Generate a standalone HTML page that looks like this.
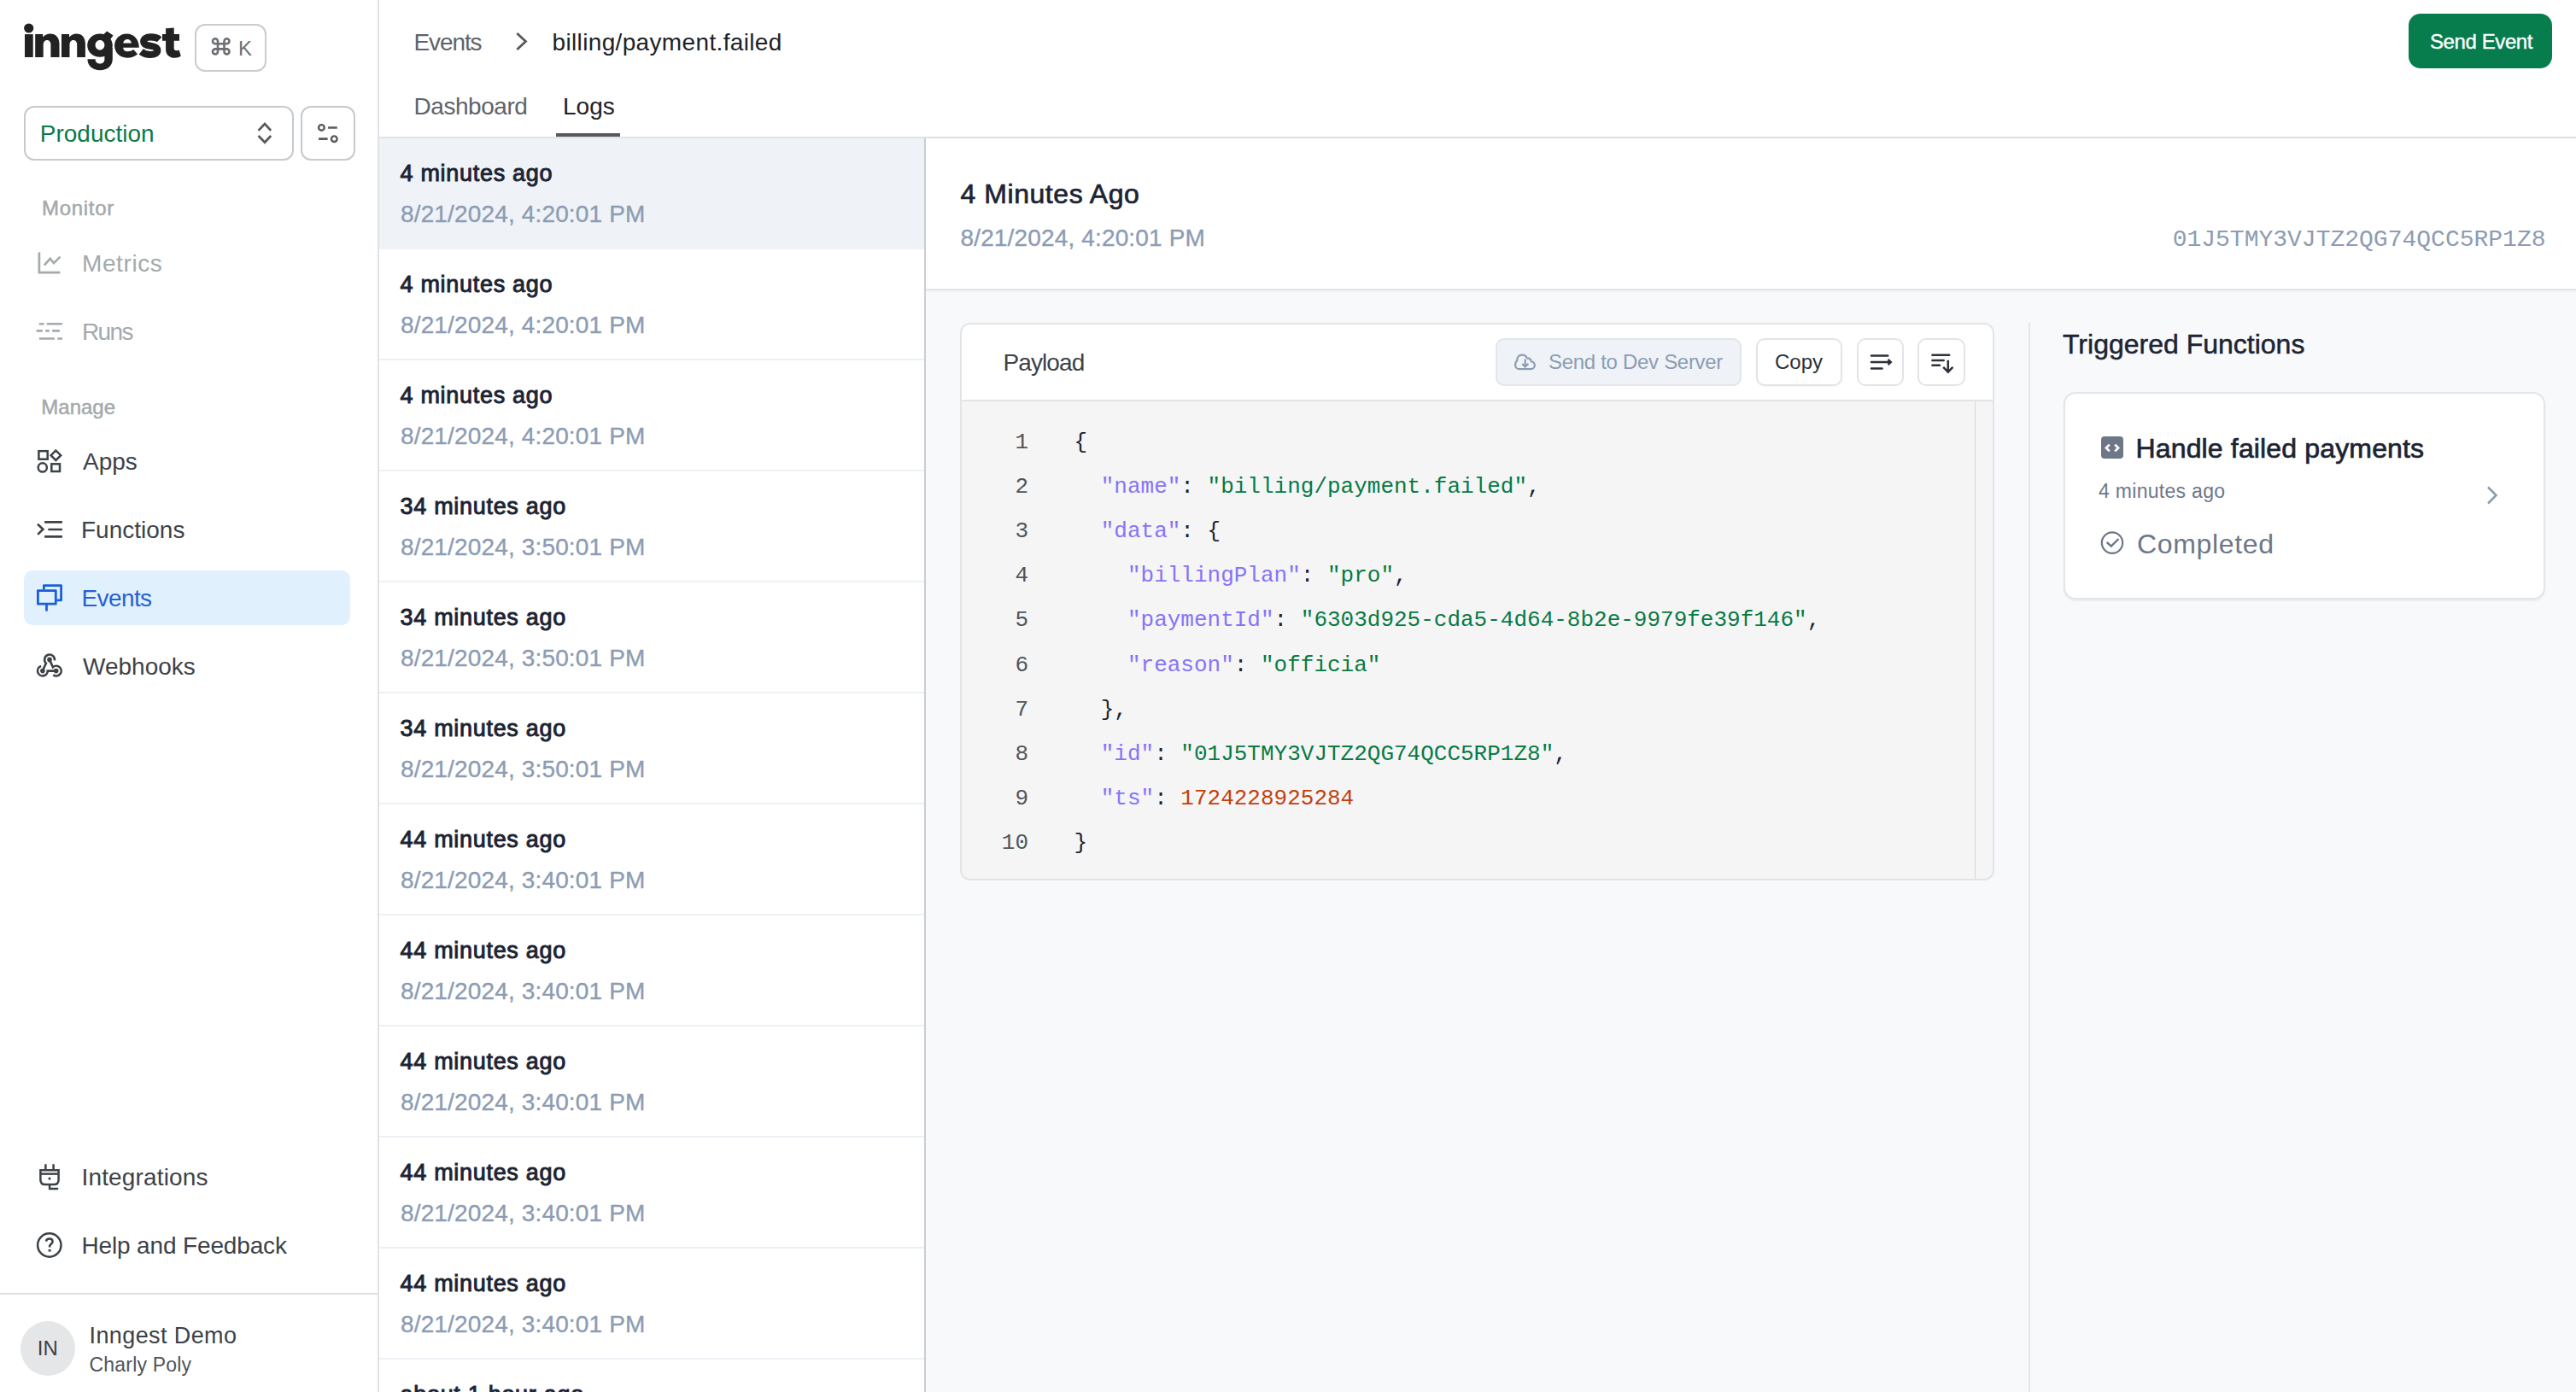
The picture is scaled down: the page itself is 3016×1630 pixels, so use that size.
<!DOCTYPE html>
<html><head><meta charset="utf-8"><title>Inngest Events</title>
<style>
html,body{margin:0;padding:0;width:3016px;height:1630px;overflow:hidden;background:#ffffff;}
body{position:relative;font-family:'Liberation Sans', sans-serif;}
.t{position:absolute;white-space:nowrap;line-height:1;}
.s{font-family:'Liberation Sans', sans-serif;}
.m{font-family:'Liberation Mono', monospace;}
.b{position:absolute;box-sizing:border-box;}
</style></head><body>

<div class="b" style="left:1084px;top:340px;width:1932px;height:1290px;background:#f8f9fb;"></div>
<div class="b" style="left:1084px;top:162px;width:1932px;height:176px;background:#ffffff;"></div>
<div class="b" style="left:1084px;top:338px;width:1932px;height:2px;background:#e3e5e8;"></div>
<div class="b" style="left:1084px;top:340px;width:1932px;height:3px;background:linear-gradient(#eceef1,#f8f9fb);"></div>
<div class="b" style="left:444px;top:160px;width:2572px;height:2px;background:#dfe1e4;"></div>
<div class="b" style="left:442px;top:0px;width:2px;height:1630px;background:#e0e2e5;"></div>
<div class="b" style="left:1082px;top:162px;width:2px;height:1468px;background:#c9cdd2;"></div>
<svg class="b" style="left:0;top:0" width="230" height="100" viewBox="0 0 230 100"><g fill="#222222"><circle cx="33.7" cy="33" r="5.6"/><rect x="29" y="40.1" width="9.7" height="26.9"/><path d="M41.2 67 V40.1 H50.2 V43.6 C52 41 55 39.4 58.8 39.4 C65.4 39.4 69.5 44 69.5 51.2 V67 H59.4 V52.8 C59.4 49.2 57.8 47.1 55 47.1 C52.3 47.1 50.7 49.3 50.7 52.9 V67 Z"/><path d="M72 67 V40.1 H81 V43.6 C82.8 41 85.8 39.4 89.6 39.4 C96.2 39.4 99.9 44 99.9 51.2 V67 H90.2 V52.8 C90.2 49.2 88.6 47.1 85.8 47.1 C83.1 47.1 81.5 49.3 81.5 52.9 V67 Z"/><path fill-rule="evenodd" d="M117 39.4 C125.3 39.4 131.8 45.4 131.8 53.1 C131.8 60.8 125.3 66.8 117 66.8 C108.7 66.8 102.2 60.8 102.2 53.1 C102.2 45.4 108.7 39.4 117 39.4 Z M117 47 C113.9 47 111.6 49.6 111.6 52.75 C111.6 55.9 113.9 58.5 117 58.5 C120.1 58.5 122.4 55.9 122.4 52.75 C122.4 49.6 120.1 47 117 47 Z"/><path d="M120.5 41 L125.2 36.6 L132.6 41.4 L128.8 46.5 Z"/><path d="M122.4 56 V69.6 C122.4 72.8 120.2 74.6 117 74.6 C113.8 74.6 111.6 72.6 111.6 69.3 H102.4 C102.6 77.4 109 82.2 117 82.2 C125.6 82.2 131.8 77 131.8 69.2 V56 Z"/><path fill-rule="evenodd" d="M162.8 55.7 C162.8 45.8 156.6 39.4 148.4 39.4 C140.1 39.4 134.1 45.6 134.1 53.6 C134.1 61.7 140.3 67.7 148.7 67.7 C154.3 67.7 158.5 65.6 161.1 63.2 L156.2 58 C154.4 59.3 151.9 60.3 149.1 60.3 C146.3 60.3 144.5 58.6 144.1 55.7 Z M144.2 50.4 C144.7 47.8 146.5 46.1 149.1 46.1 C151.6 46.1 153.5 47.8 154 50.4 Z"/><path d="M194.1 33.2 L203.7 32.4 V40.1 H210 V47.7 H203.7 V56.3 C203.7 58.4 204.8 59.3 206.5 59.3 C207.7 59.3 208.7 59.1 209.7 58.8 L211.8 65.5 C209.8 67 207.6 67.7 204.8 67.7 C198.4 67.7 194.1 64.2 194.1 57.4 V47.7 H190 V40.1 H194.1 Z"/></g><path d="M186.6 46.4 C184.4 44.3 180.8 43.4 176.3 43.4 C171.2 43.4 168.2 45.5 168.2 48.7 C168.2 52.5 172.2 53.2 176.3 53.7 C181.2 54.3 184.3 55.8 184.3 59.1 C184.3 62.3 181 64 176 64 C171.5 64 167.8 62.6 165.2 60.6" stroke="#222222" stroke-width="8.2" fill="none"/></svg>
<div class="b" style="left:228px;top:28px;width:84px;height:56px;border:2px solid #c8ccd0;border-radius:12px;"></div>
<svg class="b" style="left:245px;top:42px;" width="27" height="25" viewBox="0 0 27 25" fill="none"><path d="M7 9.3 A3 3 0 1 1 10 6.3 V18.4 A3 3 0 1 1 7 15.4 H20.5 A3 3 0 1 1 17.5 18.4 V6.3 A3 3 0 1 1 20.5 9.3 Z" stroke="#6b6f73" stroke-width="2.6" fill="none"/></svg>
<div class="t s" style="top:44.8px;font-size:24px;color:#6b6f73;left:279.0px;">K</div>
<div class="b" style="left:28px;top:124px;width:316px;height:64px;border:2px solid #c6cacd;border-radius:12px;"></div>
<div class="t s" style="top:143.0px;font-size:28px;color:#0a7a48;left:46.8px;">Production</div>
<svg class="b" style="left:298px;top:140px;" width="24" height="32" viewBox="0 0 24 32" fill="none"><path d="M4.6 12.9 L12 5 L19.2 12.9 M4.6 19 L12 26.7 L19.2 19" stroke="#58595b" stroke-width="2.7"/></svg>
<div class="b" style="left:352px;top:124px;width:64px;height:64px;border:2px solid #c6cacd;border-radius:12px;"></div>
<svg class="b" style="left:368px;top:140px;" width="32" height="32" viewBox="0 0 32 32" fill="none"><circle cx="8.4" cy="9.4" r="3.3" stroke="#58595b" stroke-width="2.4"/><circle cx="23.3" cy="22.7" r="3.3" stroke="#58595b" stroke-width="2.4"/><path d="M16.1 9.5 H26.8 M5.1 22.6 H15.6" stroke="#58595b" stroke-width="2.6"/></svg>
<div class="t s" style="top:232.3px;font-size:24px;color:#a3a9ac;left:49.0px;letter-spacing:0.7px;-webkit-text-stroke:0.5px #a3a9ac;">Monitor</div>
<div class="t s" style="top:464.8px;font-size:24px;color:#a3a9ac;left:48.3px;-webkit-text-stroke:0.5px #a3a9ac;">Manage</div>
<svg class="b" style="left:38px;top:290px;" width="40" height="40" viewBox="0 0 40 40" fill="none"><path d="M7.9 5.5 V29.2 H32.5 M13.8 20.7 L20.7 12.9 L25 18.1 L32.5 10.6" stroke="#a4aaad" stroke-width="2.7"/></svg>
<div class="t s" style="top:295.0px;font-size:28px;color:#a3a9ac;left:96.0px;letter-spacing:0.6px;">Metrics</div>
<svg class="b" style="left:38px;top:368px;" width="40" height="40" viewBox="0 0 40 40" fill="none"><path d="M7.8 11.3 H13.6 M16.8 11.3 H35 M4.6 19.4 H11.9 M15.2 19.4 H19.8 M23.1 19.4 H31.9 M7.9 28.5 H25.9 M29.2 28.5 H35" stroke="#a4aaad" stroke-width="2.6"/></svg>
<div class="t s" style="top:375.0px;font-size:28px;color:#a3a9ac;left:96.0px;letter-spacing:-1.6px;">Runs</div>
<svg class="b" style="left:38px;top:520px;" width="40" height="40" viewBox="0 0 40 40" fill="none"><rect x="7.4" y="8.2" width="10.3" height="9.5" stroke="#3d4248" stroke-width="2.5"/><path d="M27.4 7.6 L33.2 13.2 L27.4 18.9 L21.6 13.2 Z" stroke="#3d4248" stroke-width="2.5"/><circle cx="11.8" cy="27.4" r="5.1" stroke="#3d4248" stroke-width="2.5"/><rect x="22.3" y="23.3" width="9.7" height="8.7" stroke="#3d4248" stroke-width="2.5"/></svg>
<div class="t s" style="top:527.0px;font-size:28px;color:#3d4247;left:97.0px;">Apps</div>
<svg class="b" style="left:38px;top:600px;" width="40" height="40" viewBox="0 0 40 40" fill="none"><path d="M6 13.8 L12.4 19.8 L6.2 25.9" stroke="#3d4248" stroke-width="2.6"/><path d="M14.1 11.4 H34.9 M18.4 20 H34.9 M14.1 28.4 H34.9" stroke="#3d4248" stroke-width="2.7"/></svg>
<div class="t s" style="top:607.0px;font-size:28px;color:#3d4247;left:95.0px;">Functions</div>
<div class="b" style="left:28px;top:668px;width:382px;height:64px;background:#e1f0fd;border-radius:10px;"></div>
<svg class="b" style="left:38px;top:680px;" width="40" height="40" viewBox="0 0 40 40" fill="none"><path d="M13.4 10.3 V5.6 H33.6 V22.8 H28.3" stroke="#1a5fd8" stroke-width="2.8" stroke-linejoin="round"/><rect x="6.4" y="11.6" width="20.9" height="15.6" stroke="#1a5fd8" stroke-width="2.8" stroke-linejoin="round"/><path d="M16.5 27.2 V35.6" stroke="#1a5fd8" stroke-width="2.8"/></svg>
<div class="t s" style="top:687.0px;font-size:28px;color:#2660d5;left:95.5px;letter-spacing:-0.6px;">Events</div>
<svg class="b" style="left:38px;top:758px;" width="40" height="40" viewBox="0 0 40 40" fill="none"><g stroke="#3d4248" stroke-width="2.6" fill="none"><path d="M11.9 27.6 L15.9 18.6 A5.9 5.9 0 1 1 25.9 15.4"/><path d="M10.1 21.9 A5.9 5.9 0 1 0 17.8 27.6 H27.7"/><path d="M20 14.4 L23.9 23.2 A5.9 5.9 0 1 1 24.3 32.4"/></g><circle cx="20" cy="14.4" r="2.8" fill="#3d4248"/><circle cx="11.9" cy="27.6" r="2.8" fill="#3d4248"/><circle cx="27.7" cy="27.6" r="2.8" fill="#3d4248"/></svg>
<div class="t s" style="top:767.0px;font-size:28px;color:#3d4247;left:97.0px;">Webhooks</div>
<svg class="b" style="left:38px;top:1358px;" width="40" height="40" viewBox="0 0 40 40" fill="none"><g stroke="#3d4248" stroke-width="2.5" fill="none"><path d="M15.4 5.2 V12 M24.6 5.2 V12"/><path d="M9.4 12.2 H30.6 V23.5 Q30.6 29.1 25 29.1 H15 Q9.4 29.1 9.4 23.5 Z"/><path d="M9.4 16.6 H30.6"/><path d="M20.1 29.1 V34 H30.2"/></g><circle cx="20" cy="22.1" r="1.6" fill="#3d4248"/></svg>
<div class="t s" style="top:1365.0px;font-size:28px;color:#3d4247;left:95.5px;letter-spacing:0.15px;">Integrations</div>
<svg class="b" style="left:38px;top:1438px;" width="40" height="40" viewBox="0 0 40 40" fill="none"><circle cx="19.8" cy="20" r="13.7" stroke="#3d4248" stroke-width="2.5"/><path d="M16 15.6 C16.3 13.5 17.9 12.6 19.9 12.6 C22.2 12.6 23.6 14 23.6 15.9 C23.6 18.4 20.1 18.8 20.1 21.8 V22.5" stroke="#3d4248" stroke-width="2.5" fill="none"/><rect x="18.6" y="25" width="3" height="2.6" fill="#3d4248"/></svg>
<div class="t s" style="top:1445.0px;font-size:28px;color:#3d4247;left:95.5px;letter-spacing:-0.15px;">Help and Feedback</div>
<div class="b" style="left:0px;top:1514px;width:442px;height:2px;background:#dfe1e4;"></div>
<div class="b" style="left:24px;top:1547px;width:64px;height:64px;background:#e5e6e8;border-radius:50%;"></div>
<div class="t s" style="top:1567.3px;font-size:24px;color:#3d4247;left:43.8px;">IN</div>
<div class="t s" style="top:1550.5px;font-size:27px;color:#3d4247;left:104.5px;letter-spacing:0.4px;">Inngest Demo</div>
<div class="t s" style="top:1587.1px;font-size:23px;color:#4f555b;left:104.5px;letter-spacing:0.2px;">Charly Poly</div>
<div class="t s" style="top:36.4px;font-size:28px;color:#5f6368;left:484.5px;letter-spacing:-1.1px;">Events</div>
<svg class="b" style="left:598px;top:32px;" width="24" height="32" viewBox="0 0 24 32" fill="none"><path d="M7.3 7 L17.5 16.5 L7.3 26" stroke="#58595b" stroke-width="2.8"/></svg>
<div class="t s" style="top:36.4px;font-size:28px;color:#1e2226;left:646.5px;letter-spacing:0.35px;">billing/payment.failed</div>
<div class="t s" style="top:111.0px;font-size:28px;color:#5f6368;left:484.5px;letter-spacing:-0.45px;">Dashboard</div>
<div class="t s" style="top:111.0px;font-size:28px;color:#1e2226;left:659.0px;">Logs</div>
<div class="b" style="left:651px;top:156px;width:75px;height:4px;background:#57595c;"></div>
<div class="b" style="left:2820px;top:16px;width:168px;height:64px;background:#077c4d;border-radius:14px;"></div>
<div class="t s" style="top:36.8px;font-size:24px;color:#ffffff;left:2845.0px;letter-spacing:-0.4px;-webkit-text-stroke:0.4px #ffffff;">Send Event</div>
<div class="b" style="left:444px;top:162px;width:638px;height:130px;background:#eff3f8;"></div>
<div class="t s" style="top:189.5px;font-size:27px;color:#1c2434;left:468.5px;letter-spacing:0.7px;-webkit-text-stroke:0.95px #1c2434;">4 minutes ago</div>
<div class="t s" style="top:237.0px;font-size:28px;color:#8c9cb3;left:469.0px;letter-spacing:0.15px;-webkit-text-stroke:0.35px #8c9cb3;">8/21/2024, 4:20:01 PM</div>
<div class="b" style="left:444px;top:420px;width:638px;height:2px;background:#edf1f6;"></div>
<div class="t s" style="top:319.5px;font-size:27px;color:#1c2434;left:468.5px;letter-spacing:0.7px;-webkit-text-stroke:0.95px #1c2434;">4 minutes ago</div>
<div class="t s" style="top:367.0px;font-size:28px;color:#8c9cb3;left:469.0px;letter-spacing:0.15px;-webkit-text-stroke:0.35px #8c9cb3;">8/21/2024, 4:20:01 PM</div>
<div class="b" style="left:444px;top:550px;width:638px;height:2px;background:#edf1f6;"></div>
<div class="t s" style="top:449.5px;font-size:27px;color:#1c2434;left:468.5px;letter-spacing:0.7px;-webkit-text-stroke:0.95px #1c2434;">4 minutes ago</div>
<div class="t s" style="top:497.0px;font-size:28px;color:#8c9cb3;left:469.0px;letter-spacing:0.15px;-webkit-text-stroke:0.35px #8c9cb3;">8/21/2024, 4:20:01 PM</div>
<div class="b" style="left:444px;top:680px;width:638px;height:2px;background:#edf1f6;"></div>
<div class="t s" style="top:579.5px;font-size:27px;color:#1c2434;left:468.5px;letter-spacing:0.7px;-webkit-text-stroke:0.95px #1c2434;">34 minutes ago</div>
<div class="t s" style="top:627.0px;font-size:28px;color:#8c9cb3;left:469.0px;letter-spacing:0.15px;-webkit-text-stroke:0.35px #8c9cb3;">8/21/2024, 3:50:01 PM</div>
<div class="b" style="left:444px;top:810px;width:638px;height:2px;background:#edf1f6;"></div>
<div class="t s" style="top:709.5px;font-size:27px;color:#1c2434;left:468.5px;letter-spacing:0.7px;-webkit-text-stroke:0.95px #1c2434;">34 minutes ago</div>
<div class="t s" style="top:757.0px;font-size:28px;color:#8c9cb3;left:469.0px;letter-spacing:0.15px;-webkit-text-stroke:0.35px #8c9cb3;">8/21/2024, 3:50:01 PM</div>
<div class="b" style="left:444px;top:940px;width:638px;height:2px;background:#edf1f6;"></div>
<div class="t s" style="top:839.5px;font-size:27px;color:#1c2434;left:468.5px;letter-spacing:0.7px;-webkit-text-stroke:0.95px #1c2434;">34 minutes ago</div>
<div class="t s" style="top:887.0px;font-size:28px;color:#8c9cb3;left:469.0px;letter-spacing:0.15px;-webkit-text-stroke:0.35px #8c9cb3;">8/21/2024, 3:50:01 PM</div>
<div class="b" style="left:444px;top:1070px;width:638px;height:2px;background:#edf1f6;"></div>
<div class="t s" style="top:969.5px;font-size:27px;color:#1c2434;left:468.5px;letter-spacing:0.7px;-webkit-text-stroke:0.95px #1c2434;">44 minutes ago</div>
<div class="t s" style="top:1017.0px;font-size:28px;color:#8c9cb3;left:469.0px;letter-spacing:0.15px;-webkit-text-stroke:0.35px #8c9cb3;">8/21/2024, 3:40:01 PM</div>
<div class="b" style="left:444px;top:1200px;width:638px;height:2px;background:#edf1f6;"></div>
<div class="t s" style="top:1099.5px;font-size:27px;color:#1c2434;left:468.5px;letter-spacing:0.7px;-webkit-text-stroke:0.95px #1c2434;">44 minutes ago</div>
<div class="t s" style="top:1147.0px;font-size:28px;color:#8c9cb3;left:469.0px;letter-spacing:0.15px;-webkit-text-stroke:0.35px #8c9cb3;">8/21/2024, 3:40:01 PM</div>
<div class="b" style="left:444px;top:1330px;width:638px;height:2px;background:#edf1f6;"></div>
<div class="t s" style="top:1229.5px;font-size:27px;color:#1c2434;left:468.5px;letter-spacing:0.7px;-webkit-text-stroke:0.95px #1c2434;">44 minutes ago</div>
<div class="t s" style="top:1277.0px;font-size:28px;color:#8c9cb3;left:469.0px;letter-spacing:0.15px;-webkit-text-stroke:0.35px #8c9cb3;">8/21/2024, 3:40:01 PM</div>
<div class="b" style="left:444px;top:1460px;width:638px;height:2px;background:#edf1f6;"></div>
<div class="t s" style="top:1359.5px;font-size:27px;color:#1c2434;left:468.5px;letter-spacing:0.7px;-webkit-text-stroke:0.95px #1c2434;">44 minutes ago</div>
<div class="t s" style="top:1407.0px;font-size:28px;color:#8c9cb3;left:469.0px;letter-spacing:0.15px;-webkit-text-stroke:0.35px #8c9cb3;">8/21/2024, 3:40:01 PM</div>
<div class="b" style="left:444px;top:1590px;width:638px;height:2px;background:#edf1f6;"></div>
<div class="t s" style="top:1489.5px;font-size:27px;color:#1c2434;left:468.5px;letter-spacing:0.7px;-webkit-text-stroke:0.95px #1c2434;">44 minutes ago</div>
<div class="t s" style="top:1537.0px;font-size:28px;color:#8c9cb3;left:469.0px;letter-spacing:0.15px;-webkit-text-stroke:0.35px #8c9cb3;">8/21/2024, 3:40:01 PM</div>
<div class="b" style="left:444px;top:1720px;width:638px;height:2px;background:#edf1f6;"></div>
<div class="t s" style="top:1619.5px;font-size:27px;color:#1c2434;left:468.5px;letter-spacing:0.7px;-webkit-text-stroke:0.95px #1c2434;">about 1 hour ago</div>
<div class="t s" style="top:1667.0px;font-size:28px;color:#8c9cb3;left:469.0px;letter-spacing:0.15px;-webkit-text-stroke:0.35px #8c9cb3;">8/21/2024, 3:20:01 PM</div>
<div class="t s" style="top:210.5px;font-size:32px;color:#1c2434;left:1124.5px;letter-spacing:0.55px;-webkit-text-stroke:0.7px #1c2434;">4 Minutes Ago</div>
<div class="t s" style="top:265.0px;font-size:28px;color:#8c9cb3;left:1124.5px;letter-spacing:0.15px;-webkit-text-stroke:0.35px #8c9cb3;">8/21/2024, 4:20:01 PM</div>
<div class="t m" style="top:267.0px;font-size:28px;color:#8c9cb3;right:35.5px;">01J5TMY3VJTZ2QG74QCC5RP1Z8</div>
<div class="b" style="left:1124px;top:378px;width:1211px;height:653px;background:#f5f5f6;border:2px solid #e2e4e7;border-radius:12px;overflow:hidden;"></div>
<div class="b" style="left:1126px;top:380px;width:1207px;height:88px;background:#ffffff;border-radius:10px 10px 0 0;"></div>
<div class="b" style="left:1126px;top:468px;width:1207px;height:2px;background:#e2e4e7;"></div>
<div class="b" style="left:2312px;top:470px;width:1px;height:559px;background:#d3d7dd;"></div>
<div class="t s" style="top:411.0px;font-size:28px;color:#3d4247;left:1174.5px;letter-spacing:-0.9px;">Payload</div>
<div class="b" style="left:1751px;top:396px;width:288px;height:56px;background:#eff3f8;border:2px solid #e1e6ec;border-radius:10px;"></div>
<svg class="b" style="left:1765px;top:405px;" width="40" height="40" viewBox="0 0 40 40" fill="none"><path d="M14 27.1 H27.6 C30 27.1 31.8 25.2 31.8 22.8 C31.8 20.5 30.1 18.7 27.9 18.5 C27.4 16 25.4 14.3 23 14.4 C21.8 11.9 19.6 10.6 17.1 10.6 C13.6 10.6 11.3 13.3 11.3 16.6 V17.4 C9.8 18.4 9.1 20.2 9.1 22.4 C9.1 25 11.3 27.1 14 27.1 Z" stroke="#8c9cb3" stroke-width="2.2" stroke-linejoin="round"/><path d="M20.7 15.6 V24.5 M17.2 20.9 L20.7 24.5 L24.4 20.9" stroke="#8c9cb3" stroke-width="2.2"/></svg>
<div class="t s" style="top:412.0px;font-size:24px;color:#8c9cb3;left:1813.0px;letter-spacing:-0.3px;">Send to Dev Server</div>
<div class="b" style="left:2056px;top:396px;width:101px;height:56px;background:#ffffff;border:2px solid #e2e4e7;border-radius:10px;box-shadow:0 1px 2px rgba(0,0,0,0.04);"></div>
<div class="t s" style="top:412.0px;font-size:24px;color:#2c3136;left:2078.0px;">Copy</div>
<div class="b" style="left:2174px;top:396px;width:55px;height:56px;background:#ffffff;border:2px solid #e2e4e7;border-radius:10px;"></div>
<svg class="b" style="left:2180px;top:400px;" width="50" height="50" viewBox="0 0 50 50" fill="none"><path d="M11 16.4 H30.3 M11 24 H32.5 M11 31.4 H23.5" stroke="#2c3238" stroke-width="2.5" stroke-linecap="round"/><path d="M30.5 21 L33.8 24 L30.5 27" stroke="#2c3238" stroke-width="2.4" fill="none"/></svg>
<div class="b" style="left:2245px;top:396px;width:56px;height:56px;background:#ffffff;border:2px solid #e2e4e7;border-radius:10px;"></div>
<svg class="b" style="left:2250px;top:400px;" width="50" height="50" viewBox="0 0 50 50" fill="none"><path d="M12.4 15.8 H32.2 M12.4 21.9 H25.7 M12.4 27.7 H21" stroke="#2c3238" stroke-width="2.5" stroke-linecap="round"/><path d="M30.8 21.7 V35.3 M25.2 29.8 L30.8 35.6 L36.4 29.8" stroke="#2c3238" stroke-width="2.5" fill="none"/></svg>
<div class="t m" style="top:505.0px;font-size:26px;color:#50555b;right:1812.0px;">1</div>
<div class="t m" style="top:505.0px;font-size:26px;color:#1c2434;left:1257.5px;"><span style="color:#1c2434">{</span></div>
<div class="t m" style="top:557.1px;font-size:26px;color:#50555b;right:1812.0px;">2</div>
<div class="t m" style="top:557.1px;font-size:26px;color:#1c2434;left:1257.5px;"><span style="color:#1c2434">&nbsp;&nbsp;</span><span style="color:#8674f5">"name"</span><span style="color:#1c2434">:&nbsp;</span><span style="color:#087a43">"billing/payment.failed"</span><span style="color:#1c2434">,</span></div>
<div class="t m" style="top:609.2px;font-size:26px;color:#50555b;right:1812.0px;">3</div>
<div class="t m" style="top:609.2px;font-size:26px;color:#1c2434;left:1257.5px;"><span style="color:#1c2434">&nbsp;&nbsp;</span><span style="color:#8674f5">"data"</span><span style="color:#1c2434">:&nbsp;{</span></div>
<div class="t m" style="top:661.3px;font-size:26px;color:#50555b;right:1812.0px;">4</div>
<div class="t m" style="top:661.3px;font-size:26px;color:#1c2434;left:1257.5px;"><span style="color:#1c2434">&nbsp;&nbsp;&nbsp;&nbsp;</span><span style="color:#8674f5">"billingPlan"</span><span style="color:#1c2434">:&nbsp;</span><span style="color:#087a43">"pro"</span><span style="color:#1c2434">,</span></div>
<div class="t m" style="top:713.4px;font-size:26px;color:#50555b;right:1812.0px;">5</div>
<div class="t m" style="top:713.4px;font-size:26px;color:#1c2434;left:1257.5px;"><span style="color:#1c2434">&nbsp;&nbsp;&nbsp;&nbsp;</span><span style="color:#8674f5">"paymentId"</span><span style="color:#1c2434">:&nbsp;</span><span style="color:#087a43">"6303d925-cda5-4d64-8b2e-9979fe39f146"</span><span style="color:#1c2434">,</span></div>
<div class="t m" style="top:765.5px;font-size:26px;color:#50555b;right:1812.0px;">6</div>
<div class="t m" style="top:765.5px;font-size:26px;color:#1c2434;left:1257.5px;"><span style="color:#1c2434">&nbsp;&nbsp;&nbsp;&nbsp;</span><span style="color:#8674f5">"reason"</span><span style="color:#1c2434">:&nbsp;</span><span style="color:#087a43">"officia"</span></div>
<div class="t m" style="top:817.6px;font-size:26px;color:#50555b;right:1812.0px;">7</div>
<div class="t m" style="top:817.6px;font-size:26px;color:#1c2434;left:1257.5px;"><span style="color:#1c2434">&nbsp;&nbsp;</span><span style="color:#1c2434">},</span></div>
<div class="t m" style="top:869.7px;font-size:26px;color:#50555b;right:1812.0px;">8</div>
<div class="t m" style="top:869.7px;font-size:26px;color:#1c2434;left:1257.5px;"><span style="color:#1c2434">&nbsp;&nbsp;</span><span style="color:#8674f5">"id"</span><span style="color:#1c2434">:&nbsp;</span><span style="color:#087a43">"01J5TMY3VJTZ2QG74QCC5RP1Z8"</span><span style="color:#1c2434">,</span></div>
<div class="t m" style="top:921.8px;font-size:26px;color:#50555b;right:1812.0px;">9</div>
<div class="t m" style="top:921.8px;font-size:26px;color:#1c2434;left:1257.5px;"><span style="color:#1c2434">&nbsp;&nbsp;</span><span style="color:#8674f5">"ts"</span><span style="color:#1c2434">:&nbsp;</span><span style="color:#c2410c">1724228925284</span></div>
<div class="t m" style="top:973.9px;font-size:26px;color:#50555b;right:1812.0px;">10</div>
<div class="t m" style="top:973.9px;font-size:26px;color:#1c2434;left:1257.5px;"><span style="color:#1c2434">}</span></div>
<div class="b" style="left:2375px;top:378px;width:2px;height:1252px;background:#e3e6ea;"></div>
<div class="t s" style="top:387.3px;font-size:32px;color:#1c2434;left:2415.0px;-webkit-text-stroke:0.5px #1c2434;">Triggered Functions</div>
<div class="b" style="left:2416px;top:459px;width:564px;height:243px;background:#ffffff;border:2px solid #e3e5e8;border-radius:14px;box-shadow:0 2px 2px rgba(0,0,0,0.05);"></div>
<div class="b" style="left:2460px;top:511px;width:26px;height:26px;background:#6d7788;border-radius:4px;"></div>
<svg class="b" style="left:2460px;top:511px;" width="26" height="26" viewBox="0 0 26 26" fill="none"><path d="M9.8 9.6 L5.9 13.5 L9.8 17.4 M16.2 9.6 L20.1 13.5 L16.2 17.4" stroke="#ffffff" stroke-width="2.7" fill="none"/></svg>
<div class="t s" style="top:509.1px;font-size:32px;color:#1c2434;left:2500.5px;letter-spacing:0.15px;-webkit-text-stroke:0.7px #1c2434;">Handle failed payments</div>
<div class="t s" style="top:564.1px;font-size:23px;color:#6d7788;left:2457.0px;letter-spacing:0.3px;">4 minutes ago</div>
<svg class="b" style="left:2900px;top:562px;" width="32" height="36" viewBox="0 0 32 36" fill="none"><path d="M13 8.5 L22.5 18 L13 27.5" stroke="#8c9cb3" stroke-width="2.6" fill="none"/></svg>
<svg class="b" style="left:2456px;top:619px;" width="34" height="34" viewBox="0 0 34 34" fill="none"><circle cx="17" cy="16.6" r="12.2" stroke="#6d7788" stroke-width="2.2"/><path d="M10.7 16 L15.8 20.7 L24.5 12" stroke="#6d7788" stroke-width="2.4" fill="none"/></svg>
<div class="t s" style="top:620.8px;font-size:32px;color:#6d7788;left:2502.0px;letter-spacing:0.65px;">Completed</div>
</body></html>
